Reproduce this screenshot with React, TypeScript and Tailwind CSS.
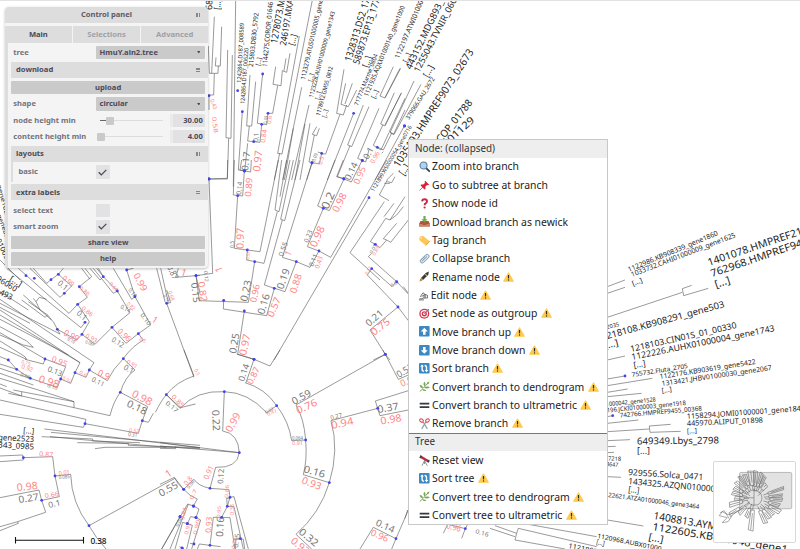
import React from "react";

type Label = [number, number, number, number, number, string];

/* Leaf names: start x, start y, end x, end y, font size, text */
const names: Label[] = [
  [241, 83, 244, 23, 5.8, "1242864.D187_008589"],
  [244.5, 104, 248.5, 48, 5.8, "1242864.D187_006220"],
  [253, 67, 258.5, 13, 6.4, "215803.DB30_5792"],
  [260, 66, 261.5, 58, 6.5, "[...]"],
  [267, 67, 273, 2, 6.8, "1144275.COROR_01646"],
  [277, 44, 285, 0, 9.5, "1278073.M"],
  [286, 46, 293.5, 0, 9, "246197.MXA"],
  [294, 46, 297, 35, 8.5, "[...]"],
  [305, 80, 323, 0, 6.4, "1123279.ATUS01000005_gene"],
  [312, 82, 314, 74, 6, "[...]"],
  [313, 98, 335, 12, 6, "1123228.AUIH01000009_gene1343"],
  [319, 100, 321, 92, 6, "[...]"],
  [320, 116, 333, 67, 6, "1178912.GM55_0812"],
  [326, 118, 328, 110, 6, "[...]"],
  [351, 62, 370, 0, 9.8, "1328313.DS2_17"],
  [359, 65, 380, 0, 9.5, "589873.EP13_177"],
  [368, 68, 371.5, 57, 9, "[...]"],
  [358, 106, 378, 55, 6, "717774.Marme_0804"],
  [368, 97, 405, 7, 6.6, "1121935.AQXX01000140_gene1000"],
  [375, 99, 378.5, 91, 6.5, "[...]"],
  [399, 59, 425, -2, 7, "1122197.ATWI010001"],
  [407, 63, 411, 54, 7, "[...]"],
  [411, 70, 446, -3, 9.4, "443152.MDG893_0"],
  [419, 73, 457, 0, 9, "1255043.TVNIR_060"],
  [428, 78, 434, 67, 9, "[...]"],
  [409, 120, 435, 79, 6.2, "379066.GAU_2672"],
  [399, 168, 474, 52, 10.6, "1035193.HMPREF9073_02673"],
  [404, 176, 410, 167, 10, "[...]"],
  [441, 143, 473, 103, 10.2, "COP_01788"],
  [451, 143, 475, 121, 10, "01129"],
  [374, 192, 412, 127, 5.6, "1121899.WS0000054_gene0716"],
  [212, 10, 212.5, 0, 9, "68"],
  [220, 10, 221, -1, 9, "[...]"],
  [629, 272, 718.5, 235, 7, "1122986.KB908339_gene1860"],
  [632, 277, 736, 237, 7, "1033732.CAHI01000009_gene1625"],
  [633, 286, 643, 282, 7, "[...]"],
  [709, 266, 803, 234, 10.3, "1401078.HMPREF21"],
  [712, 277, 803, 246, 10.3, "762968.HMPREF94"],
  [716, 288, 731, 283, 10.5, "[...]"],
  [594, 332, 619.5, 326, 5.5, "gene2035"],
  [602, 340.5, 725, 307, 9.2, "1218108.KB908291_gene503"],
  [605, 349, 619, 345.5, 9.2, "[...]"],
  [631, 352, 737, 328, 8.6, "1218103.CIN01S_01_00330"],
  [632, 360, 775, 331, 8.6, "1122226.AUHX01000004_gene1743"],
  [634, 368, 646, 366, 8.5, "[...]"],
  [632, 377, 688, 368, 6.3, "755732.Fluta_2705"],
  [660, 379, 756, 364, 7, "1122176.KB903619_gene5422"],
  [662, 386, 772, 370, 7, "1313421.JHBV01000030_gene2067"],
  [662, 393, 672, 391.5, 7, "[...]"],
  [600, 407, 656, 401.5, 6, "L01000042_gene1528"],
  [607, 412.5, 686, 405, 6.3, "196.JCKI01000003_gene1918"],
  [620, 417.5, 702, 410.5, 6.4, "742766.HMPREF9455_00368"],
  [687, 419, 801, 411, 7.4, "1158294.JOMI01000001_gene184"],
  [687, 426, 763, 422.5, 7.4, "445970.ALIPUT_01898"],
  [687, 433.5, 697, 433, 7, "[...]"],
  [637, 444.5, 719, 443.5, 9.5, "649349.Lbys_2798"],
  [637, 454, 650, 454, 9.5, "[...]"],
  [608, 460.5, 621, 461, 5.8, "7218"],
  [606, 466, 618, 467, 5.8, "4647"],
  [628, 475, 703, 480, 8.6, "929556.Solca_0471"],
  [628, 484, 715, 492, 8.6, "1434325.AZQN010000"],
  [628, 492, 639, 493.5, 8.6, "[...]"],
  [608, 497, 699, 509, 6.3, "22621.ATZA01000046_gene3464"],
  [653, 519, 716, 530, 10.3, "1408813.AYM"],
  [652, 530, 787, 553, 10.3, "1122605.KB883046_gene1"],
  [648, 540, 663, 543, 10, "[...]"],
  [597, 538, 661, 551, 6.5, "1120968.AUBX01000"],
  [596, 544, 604, 546, 7, "[...]"],
  [568, 548, 616, 558, 7, "1121802.gene"],
  [9, 280, 20, 287, 8, "[...]"],
  [-8, 278, 15, 292, 8.2, "196060"],
  [-4, 293, 11, 300, 8.2, "_493"],
  [23, 433, 34, 434, 8, "[...]"],
  [-2, 440, 34, 442, 8, "gene2523"],
  [-2, 447.5, 34, 449.5, 8, "343_0985"],
  [-3, 185, 5, 215, 6, "gene102"],
  [-3, 215, 7, 242, 6, "gene881"],
  [-4, 240, 9, 268, 7, "0100305"],
];

/* Branch lengths */
const lengths: Label[] = [
  [241, 195, 242.5, 182, 6.8, "0.14"], [234, 248, 234, 241, 5, "0.5"],
  [247, 302, 251.5, 281, 10, "0.23"], [264, 315, 270, 295, 10, "0.16"],
  [283, 290, 290, 270, 10, "0.19"], [236, 354, 239.5, 334, 10, "0.25"],
  [191, 283, 193.5, 303, 9, "0.15"], [283, 257, 288, 243, 7, "0.55"],
  [313, 267, 318, 255, 6.5, "0.11"], [308, 243, 312.5, 231, 6.5, "0.23"],
  [328, 210, 335, 194, 11, "0.2"], [350, 181, 358, 164, 9, "0.14"],
  [368, 160, 374, 149, 8.5, "0.1"], [248, 171, 250, 152, 9.3, "0.17"],
  [258, 142, 259, 133, 6.8, "0.1"], [369, 327, 384, 314, 9.6, "0.21"],
  [372, 254, 377, 245, 4.5, "0.05"], [244, 382, 249.5, 365, 8.8, "0.14"],
  [294, 405, 312, 395, 9.8, "0.59"], [378, 413, 399, 409.5, 10, "0.37"],
  [331, 420, 342.5, 417, 6, "0.27"], [303, 472, 324, 478, 10, "0.16"],
  [298, 533, 315, 547, 10, "0.32"], [375, 525, 393, 533, 9.4, "0.14"],
  [212, 410, 213, 431, 10, "0.22"], [223, 484, 224, 469, 7.8, "0.12"],
  [161, 497, 179, 487, 10, "0.55"], [223, 537, 224, 517, 10, "0.16"],
  [399, 378, 414, 369, 9.5, "0.52"], [165, 404, 176, 413, 6.3, "0.17"],
  [57, 284, 65, 291, 8, "0.1"], [76, 314, 84, 321, 8, "0.1"],
  [111, 341, 122, 348, 7.4, "0.12"], [47, 371, 61, 376.5, 7.6, "0.13"],
  [123, 369, 132, 374, 7.8, "0.1"], [91, 381, 103, 387, 7, "0.11"],
  [126, 406, 145, 415, 10, "0.18"], [49, 508, 61, 505, 8, "0.1"],
  [19, 503, 39, 500, 9.6, "0.27"], [167, 267, 173, 280, 9, "0.87"],
  [120, 308, 129, 313, 6, "0.14"], [140, 315, 148, 326, 6, "0.10"],
  [85, 343, 94, 346, 4.5, "0.082"], [67, 340, 74, 344, 5, "0.10"],
  [47, 387, 57, 390, 4.5, "0.10"], [59, 479, 70, 478, 4.8, "0.085"],
  [128, 436, 137, 437, 5.5, "0.31"], [163, 296, 167, 302, 5, "0.19"],
  [128, 290, 134, 298, 6, "0.18"], [266, 414, 274, 410, 4.5, "0.07"],
  [292, 440, 303, 440, 4.5, "0.064"], [475, 533, 488, 537, 6, "0.16"],
  [189, 489, 195, 482, 4.5, "0.09"], [315, 162, 318, 154, 5, "0.09"],
  [267, 124, 268, 116, 5, "0.09"], [20, 376, 30, 379, 4.5, "0.08"],
  [178, 527, 183, 518, 5, "0.06"], [238, 548, 240, 534, 7, "0.15"],
  [204, 271, 205, 282, 5, "0.12"], [392, 287, 399, 283, 4.5, "0.03"],
];

/* Branch supports */
const supports: Label[] = [
  [251, 197, 252.5, 178, 8.8, "0.89"], [243.5, 249, 244, 228, 10.2, "0.97"],
  [249, 260, 250, 252, 4, "0.57"], [256, 303, 260, 285, 9, "0.96"],
  [273, 318, 281, 299, 9.6, "0.57"], [296, 294, 302, 275, 9.6, "0.88"],
  [246, 356, 250.5, 335, 10.2, "0.97"], [198, 282, 201, 302, 9.2, "0.82"],
  [223, 271, 222, 268, 10, "1"], [290, 257, 292, 253, 9, "1"],
  [319, 269, 323, 257, 6.5, "0.43"], [316, 248, 325, 228, 10.3, "0.98"],
  [338, 213, 347, 195, 10, "0.98"], [359, 185, 366, 168, 9, "0.95"],
  [374, 164, 380, 153, 6.8, "0.96"], [260, 172, 262.5, 151, 10.4, "0.97"],
  [265, 143, 267, 130, 6.8, "0.84"], [271, 124, 272, 116, 6, "0.6"],
  [322, 165, 324, 157, 6, "0.5"], [374, 336, 391, 323, 10, "0.75"],
  [375, 256, 380, 247, 4.5, "0.89"], [252, 385, 260, 369, 8.8, "0.87"],
  [298, 414, 318, 405, 10, "0.76"], [381, 424.5, 402, 421, 10, "0.98"],
  [332, 429, 354, 424, 10, "0.94"], [301, 483, 320, 490, 9.8, "0.93"],
  [290, 542, 306, 555, 10, "0.93"], [370, 535, 387, 542, 9, "0.96"],
  [231, 433, 241, 415, 10, "0.99"], [208, 480, 214, 467, 7.5, "0.91"],
  [168, 478, 171, 476, 10, "1"], [187, 486, 193, 479, 7, "0.8"],
  [211, 533, 212, 517, 8, "0.93"], [402, 387, 418, 380, 9.5, "0.96"],
  [171, 397, 182, 408, 6.2, "0.85"], [133, 275, 142, 292, 9.2, "0.99"],
  [62, 279, 72, 287, 7, "0.99"], [81, 309, 91, 317, 6, "0.86"],
  [63, 335, 77, 342, 9, "0.99"], [117, 332, 128, 342, 7.8, "0.96"],
  [51, 361, 66, 367, 8, "0.95"], [38, 382, 58, 388, 10.3, "0.98"],
  [126, 363, 136, 369, 6, "0.91"], [97, 375, 108, 380, 9, "0.9"],
  [131, 396, 150, 406, 10.5, "0.98"], [39, 456, 53, 457, 6.6, "0.87"],
  [59, 475.5, 70, 474, 6, "0.01"], [45, 498, 59, 496, 6.6, "0.66"],
  [17, 491, 38, 489, 10.3, "0.98"], [151, 321, 154, 323, 9, "1"],
  [180, 275, 183, 276, 10, "1"], [85, 337, 96, 343, 6, "0.93"],
  [21, 363, 30, 366, 5, "0.75"], [21, 368, 32, 372, 6, "0.92"],
  [109, 284, 116, 292, 5, "0.69"], [79, 289, 88, 296, 5.5, "0.86"],
  [126, 305, 133, 311, 6, "0.82"], [129, 432, 139, 433, 5.5, "0.52"],
  [168, 292, 171, 301, 5.5, "0.68"], [194, 370, 197, 376, 5, "0.5"],
  [292, 445, 303, 445, 5, "0.91"], [268, 416, 277, 412, 4.5, "0.47"],
  [446, 528, 460, 532, 8.5, "0.96"], [210, 100, 214, 110, 5.5, "0.43"],
  [212, 117, 214, 133, 6, "0.58"], [184, 520, 187, 508, 5.5, "0.84"],
  [188, 535, 191, 523, 5.5, "0.92"], [197, 535, 200, 520, 5.5, "0.90"],
  [193, 500, 197, 490, 5, "0.7"], [228, 498, 229, 485, 4.8, "0.86"],
  [234, 515, 234, 504, 4.8, "0.33"], [220, 518, 221, 506, 4.8, "0.95"],
  [235, 549, 237, 538, 5, "0.77"], [367, 275, 372, 268, 4.5, "0.47"],
  [139, 340, 145, 343, 5, "0.5"], [62, 379, 71, 383, 4.5, "0.92"],
  [79, 373, 86, 377, 4.5, "0.6"],
];

/* Each tile holds branch strokes in its own three-times coordinate space */
const tiles: { origin: [number, number]; paths: string[]; dots: [number, number][] }[] = [
  {
    origin: [205, 0],
    paths: [
      "M28 50L20 220M50 80L46 198H31L33 172M40 198L39 220H13L10 138M28 220L26 285H12V330M68 150L63 413L78 415L82 165M71 415L67 537H12",
      "M92 0L85 560M112 335L100 510L119 513L128 430M135 225L125 378H140L152 245M133 378L128 423L165 427L170 373M173 222L157 370L185 374L189 340H203L218 257M212 200L204 253L228 257L232 212L245 217L255 160M237 212L243 175",
      "M283 108L218 460L231 462L322 0M224 460L208 540M290 262L233 540M312 315L260 540M265 385L238 540M300 372L270 540M315 370L285 540",
      "M335 380L322 403L335 407L343 385M328 405L312 486L343 492L350 460L338 456M417 208L395 340L415 345L425 315M422 250L408 313L430 320L455 270M442 250L420 312M405 343L362 462H350M321 489L305 540",
      "M446 340L367 540M475 315L428 435L440 440L492 320M435 437L397 530L416 536M458 475L482 486L492 450M458 475L522 325M568 278L527 372L540 378L588 280M534 374L505 436L528 450L552 398M565 200L525 288L540 294L587 205M598 378L510 540M600 295L553 395L566 402L600 330",
    ],
    dots: [[98, 272], [112, 335], [173, 222], [189, 340], [170, 373], [146, 425], [119, 513], [12, 287], [12, 537], [321, 489], [350, 460], [446, 340], [472, 481], [517, 442], [416, 536], [598, 378]],
  },
  {
    origin: [340, 0],
    paths: ["M185 278L135 375M222 243L150 398L162 404L243 253M155 400L130 450L112 441M130 455L125 460M180 205L135 293"],
    dots: [[194, 378]],
  },
  {
    origin: [190, 160],
    paths: [
      "M113 0L112 55L57 57L68 340L18 347L28 422L175 427L194 305M133 0L130 105L158 108L163 33L150 30L155 0M163 33L182 36L184 0M143 107L133 265L210 275L265 0M172 270L170 300L222 310L262 155M275 0L255 150L267 155L300 0M310 0L272 178L284 182L330 0M277 180L223 375L285 395L319 305M290 0L270 110",
      "M253 385L230 467L100 447L101 421M163 453L143 583L192 598M319 305L277 292L366 8M319 305L360 322L387 273L352 260L400 145M387 273L422 292L590 0M400 145L383 138L435 0M400 145L418 152L462 57L440 50L460 0M462 57L484 66L517 0M537 113L252 600",
      "M583 125L480 278L570 360M640 380L655 400M568 105L597 122M568 105L592 60M583 70L600 70M590 60L610 40M592 65L605 68L615 50M556 253L541 245L587 175M556 253L570 263L590 240L580 236L620 190M590 240L602 247L655 180M587 175L600 180L645 110M582 170L612 130M600 180L620 165L640 140M620 365L535 290L545 280M620 365L606 380L545 326L532 345L624 441L540 510L586 583L550 600M624 441L655 482M620 365L655 402M586 583L600 600",
    ],
    dots: [[57, 57], [18, 347], [101, 421], [163, 453], [194, 305], [172, 270], [143, 107], [163, 33], [253, 385], [319, 305], [366, 8], [387, 273], [400, 145], [462, 57], [517, 2], [537, 113], [556, 253], [545, 326], [620, 365], [624, 441], [586, 583], [192, 598]],
  },
  {
    origin: [160, 350],
    paths: [
      "M72 0L102 78Q50 95 19 134Q5 150 -14 187M19 134L60 175Q110 120 193 125Q265 127 320 188L350 167M255 98Q315 115 350 167Q387 215 395 272L437 270Q432 205 408 165L676 13L668 0M437 270Q442 330 430 374L508 398Q538 300 513 212L653 175L646 153L745 122M653 175L660 197L745 180M508 398Q480 490 408 553L455 597M676 13L715 88L745 75",
      "M193 125L188 243Q235 250 238 308Q232 355 167 352L150 415Q115 408 102 388L71 418Q50 400 43 382L0 403M71 418Q90 440 112 447L100 468L83 462L-20 640M150 415L207 419L210 442L202 469L185 502M238 308L0 278M238 308L0 288M0 295L47 296V290M258 98L282 28L230 12M282 28L330 48L360 0",
      "M745 480L708 566L640 532L600 597M708 566L695 597M60 500L5 597M85 463L30 597M100 468L117 477L108 503L122 510L95 597M108 503L92 500L82 521L68 517L45 597M82 521L97 526L80 597M185 502H160L150 586L118 582L112 597M150 586L182 590M185 502L210 503L225 597M202 469L222 470L250 597M210 442L222 440L265 597M202 469L200 445H210M241 566L228 564L226 597M241 566L250 568L254 597M67 595L58 590M102 582L90 580",
    ],
    dots: [[19, 134], [193, 125], [350, 167], [437, 270], [676, 13], [653, 175], [508, 398], [238, 308], [150, 415], [71, 418], [282, 28], [708, 566], [60, 500], [100, 468], [108, 503], [82, 521], [210, 442], [202, 469], [185, 502], [150, 586], [241, 566], [67, 595], [102, 582]],
  },
  {
    origin: [0, 260],
    paths: [
      "M470 25L495 125L500 130L582 352M482 25L505 128M500 130L512 128L500 90M415 520L427 482L445 487L460 460M427 482L443 440L361 397Q340 425 330 467L222 443V425L65 395M222 443L65 408L65 395L40 390M65 408L25 400M415 520L255 491L258 478L0 420M255 491L250 502L0 463",
      "M361 397Q375 350 405 330L370 296Q395 260 430 240L415 221L452 195L405 110L380 30M405 110L395 118L340 25M370 296Q340 325 322 362L268 330L282 308L0 118M268 330L258 352L225 338L240 308L0 150M225 338L212 370L182 357L197 320L135 297L0 218M182 357L172 382L91 355L0 325",
      "M415 221L378 250L336 202L390 158L352 93L310 50L295 25M352 93L340 100L280 25M336 202L285 253L246 223L268 185L233 133L262 112L238 80L275 50L255 25M246 223L230 240L172 208L160 185L70 105M172 208L180 222L0 130M233 133L207 160L55 25M255 187L243 203L20 25M193 100L215 78L175 43L190 25M193 100L180 112L90 25M153 59L140 70L100 25M175 43L153 59",
      "M155 180L143 165L85 125M143 165L135 172L65 120M120 150L108 125L100 115M108 125L118 112L140 118M0 165L210 290L240 308M0 178L205 285M0 200L80 243L100 262L70 255L0 225M0 243L75 290L80 298L0 262M75 298L130 312L135 297M25 300L0 290M25 300L50 328L0 312M50 328L91 355M0 340L100 375M0 355L115 390L222 425M20 380L0 372M0 384L65 408M0 95L85 150M0 142L90 190",
      "M290 25L310 50M245 25L270 58M380 30L400 25M0 0L60 60M310 50L300 60L270 25",
      "M551 688L525 655L267 797Q215 730 212 643L165 648L158 590L70 593L68 585L0 588M70 593V600L0 605M165 648L178 710L125 721L117 690L0 713M125 721L137 757L53 785L55 790L0 812M53 785L0 800M267 797Q285 830 318 867M133 507L600 563M153 517L460 545L600 556M125 530L278 537V543L420 548M232 548L385 550V556L600 563M285 566L315 562H525L600 566M150 530L500 562",
      "M535 25L527 52L588 47L600 100M588 47L600 46M587 432L541 443L499 404",
    ],
    dots: [[175, 43], [153, 59], [103, 55], [78, 47], [193, 100], [238, 80], [233, 133], [255, 187], [246, 223], [172, 208], [310, 50], [352, 93], [380, 30], [405, 110], [336, 202], [415, 221], [370, 296], [268, 330], [225, 338], [182, 357], [135, 297], [91, 355], [50, 328], [25, 300], [361, 397], [427, 482], [255, 491], [500, 130], [588, 47], [70, 593], [165, 648], [125, 721], [267, 797], [551, 688], [540, 770], [581, 739], [588, 772], [562, 791], [546, 864]],
  },
  {
    origin: [600, 200],
    paths: ["M22 260L75 240M22 280L75 262M22 352L247 277M275 256L247 266L251 287L325 265M22 480L75 468M22 537L75 528"],
    dots: [[75, 528]],
  },
  {
    origin: [600, 370],
    paths: ["M22 47L157 25M22 67L83 57M22 80L125 70M22 140L38 137M22 160L115 150M22 185L148 177M212 163L148 168L150 187L242 184M22 212L90 209M22 230L47 229M22 248L42 247M22 320L63 322M22 450L130 468"],
    dots: [[38, 137]],
  },
  {
    origin: [405, 395],
    paths: ["M0 370L8 345M128 388L115 415M128 388L181 401L170 430M270 392L335 415L340 400L575 455M335 415L330 435L480 462M370 388L575 425M181 401L188 388M255 400L330 425"],
    dots: [[181, 401]],
  },
];

function Labels({ items, fill }: { items: Label[]; fill: string }) {
  return (
    <g fill={fill} fontFamily='"Noto Sans", sans-serif'>
      {items.map(([x1, y1, x2, y2, size, text], i) => {
        const angle = (Math.atan2(y2 - y1, x2 - x1) * 180) / Math.PI;
        return (
          <text
            key={i}
            fontSize={size}
            transform={`translate(${x1} ${y1}) rotate(${angle})`}
            {...(text.length > 1 ? { textLength: Math.hypot(x2 - x1, y2 - y1), lengthAdjust: "spacingAndGlyphs" } : {})}
          >
            {text}
          </text>
        );
      })}
    </g>
  );
}

function Tree() {
  return (
    <svg className="block h-[549px] w-[800px]" viewBox="0 0 800 549">
      {tiles.map((tile, i) => (
        <g key={i} transform={`translate(${tile.origin[0]} ${tile.origin[1]}) scale(0.33333)`}>
          {tile.paths.map((d, j) => (
            <path key={j} d={d} fill="none" stroke="#555" strokeWidth="1.8" />
          ))}
        </g>
      ))}
      <Labels items={lengths} fill="#777" />
      <Labels items={supports} fill="#ff8585" />
      <Labels items={names} fill="#222" />
      {tiles.map((tile, i) => (
        <g key={i} fill="#4444e6">
          {tile.dots.map(([x, y], j) => (
            <circle key={j} cx={tile.origin[0] + x / 3} cy={tile.origin[1] + y / 3} r="1.4" />
          ))}
        </g>
      ))}
      <path d="M15.5 540.2H83.5M15.5 537V543.5M83.5 537V543.5" stroke="#111" strokeWidth="1.1" />
      <text x="90.5" y="543.5" fontSize="8.3" fontWeight="500" textLength="16" fontFamily='"Noto Sans", sans-serif' fill="#111">0.38</text>
      <path d="M0 .5H800" stroke="#e2e2e2" />
    </svg>
  );
}

/* ---------- control panel ---------- */

function Grip({ vertical }: { vertical?: boolean }) {
  return (
    <span className={vertical ? "flex gap-[1px]" : "flex flex-col gap-[1px]"}>
      <i className={vertical ? "h-[4px] w-[1.3px] bg-[#888]" : "h-[1.2px] w-[4px] bg-[#888]"} />
      <i className={vertical ? "h-[4px] w-[1.3px] bg-[#888]" : "h-[1.2px] w-[4px] bg-[#888]"} />
    </span>
  );
}

function Folder({ label, vertical }: { label: string; vertical?: boolean }) {
  return (
    <div className="flex h-4 items-center justify-between bg-[#dddddd] pl-[5px] pr-[8px] text-[#4a4a58]">
      <span>{label}</span>
      <Grip vertical={vertical} />
    </div>
  );
}

function Row({ label, children }: { label: string; children: React.ReactNode }) {
  return (
    <div className="flex h-[13.5px] items-center">
      <span className="w-[85px] shrink-0 pl-[2.3px] text-[#73737d]">{label}</span>
      {children}
    </div>
  );
}

function Select({ value }: { value: string }) {
  return (
    <div className="flex h-[13.5px] w-[109.3px] items-center justify-between rounded-[1px] bg-[#cacaca] pl-[3.5px] pr-[5px] text-[#4a4a58]">
      {value}
      <svg viewBox="0 0 4 3" className="h-[2.6px] w-[3.6px]"><path d="M0 0H4L2 3Z" fill="#4a4a58" /></svg>
    </div>
  );
}

function Slider({ value, filled }: { value: string; filled?: boolean }) {
  return (
    <>
      <div className="flex h-3 w-[67px] items-center">
        <i className={filled ? "ml-[4px] h-[1.5px] w-[6px] bg-[#66666e]" : "w-[1px]"} />
        <i className="h-[8px] w-[8.3px] rounded-[1px] bg-[#cacaca]" />
        <i className="h-px grow bg-[#dddddf]" />
      </div>
      <div className="ml-[7px] flex h-[13px] w-[35.3px] items-center justify-end rounded-[1px] border-l-[3px] border-[#ebebec] bg-[#e2e2e5] pr-[2.5px] text-[#4a4a58]">{value}</div>
    </>
  );
}

function Check({ on }: { on?: boolean }) {
  return (
    <span className="flex h-[13.6px] w-[13.8px] items-center justify-center rounded-[1px] bg-[#e2e2e5]">
      {on && (
        <svg viewBox="0 0 9 7" className="h-[7px] w-[9px]"><path d="M.7 3.2L3.3 5.9L8.3.9" fill="none" stroke="#4a4a58" strokeWidth="1.3" /></svg>
      )}
    </span>
  );
}

function Button({ label }: { label: string }) {
  return <div className="flex h-[13.3px] w-[194.3px] items-center justify-center rounded-[1px] bg-[#cacaca] text-[#4a4a58]">{label}</div>;
}

function ControlPanel() {
  return (
    <div className="absolute left-[5px] top-[7px] flex h-[261.3px] w-[203px] flex-col overflow-hidden rounded-[4px] bg-[#f4f4f4] font-['Noto_Sans',sans-serif] text-[7.6px] font-bold leading-none shadow-[0_1px_3px_rgba(0,0,0,0.25)]">
      <div className="relative flex h-[16.3px] shrink-0 items-center justify-center bg-[#dddddd] text-[#5b5b67]">
        Control panel
        <span className="absolute right-[8px]"><Grip vertical /></span>
      </div>
      <div className="mt-[3px] flex h-[16.4px] shrink-0 gap-[1.5px] text-center leading-[16.4px] text-[#a0a0a8]">
        <div className="flex-1 bg-[#dddddd] text-[#4a4a58]">Main</div>
        <div className="flex-1 bg-[#dddddd]">Selections</div>
        <div className="flex-1 bg-[#dddddd]">Advanced</div>
      </div>
      <div className="grow border-l-[3px] border-[#dddddd] pl-[3px] pt-[3px]">
        <Row label="tree"><Select value="HmuY.aln2.tree" /></Row>
        <div className="mt-[2.9px]"><Folder label="download" /></div>
        <div className="mt-[3px]"><Button label="upload" /></div>
        <div className="mt-[3px]"><Row label="shape"><Select value="circular" /></Row></div>
        <div className="mt-[2.9px]"><Row label="node height min"><Slider value="30.00" filled /></Row></div>
        <div className="mt-[2.8px]"><Row label="content height min"><Slider value="4.00" /></Row></div>
        <div className="mt-[2.7px]"><Folder label="layouts" vertical /></div>
        <div className="border-l-2 border-[#dddddd] pb-[2.8px] pt-[3px]">
          <div className="flex h-[13.6px] items-center pl-[5.5px] text-[#73737d]"><span className="w-[77.5px]">basic</span><Check on /></div>
        </div>
        <div className="mt-[2.8px]"><Folder label="extra labels" /></div>
        <div className="mt-[3.2px]"><Row label="select text"><Check /></Row></div>
        <div className="mt-[2.9px]"><Row label="smart zoom"><Check on /></Row></div>
        <div className="mt-[2.5px]"><Button label="share view" /></div>
        <div className="mt-[3px]"><Button label="help" /></div>
      </div>
    </div>
  );
}

/* ---------- context menu ---------- */

const glyphs: Record<string, React.ReactNode> = {
  zoom: <><path d="M7 7L10.2 10.2" stroke="#37474f" strokeWidth="1.8" strokeLinecap="round" /><circle cx="4.5" cy="4.5" r="3.5" fill="#a8d4f5" stroke="#607d9b" strokeWidth="1.1" /></>,
  pin: <><path d="M.5 10.5L4 7" stroke="#78909c" strokeWidth="1" /><path d="M6.2.8L10.2 4.7L9 5.3L8 5L6.4 6.8L6.5 9L5.5 9.4L1.6 5.4L2 4.5L4.2 4.6L6 3L5.6 1.6Z" fill="#dd2038" /></>,
  question: <><path d="M3.1 3.4Q3.2 1.3 5.6 1.3Q8 1.3 8 3.3Q8 4.6 6.6 5.3Q5.6 5.8 5.6 7.2" fill="none" stroke="#c62845" strokeWidth="1.9" /><circle cx="5.6" cy="9.5" r="1.1" fill="#c62845" /></>,
  inbox: <><path d="M1.5 5H9.5L11 8V10.6H0V8Z" fill="#a9583c" /><path d="M0 8H3L4 9H7L8 8H11V10.6H0Z" fill="#d28268" /><path d="M4.4 0H6.6V3.2H8.6L5.5 6.5L2.4 3.2H4.4Z" fill="#6fae45" /></>,
  tag: <><path d="M.3 3.6L1.2 1.3L4.2 1L10.6 6.2L6.8 10.4L.7 5.6Z" fill="#fcc658" /><path d="M6.8 10.4L10.6 6.2" stroke="#e2a33d" /><circle cx="2.2" cy="2.9" r=".7" fill="#fff" /></>,
  clip: <><path d="M1.3 7.3L6.8 1.8Q8.3.7 9.6 2Q10.8 3.4 9.6 4.7L4.4 9.6Q3 10.6 1.8 9.4Q.7 8.2 1.9 7L6.3 3" fill="#dce7ed" stroke="#7f9bb0" strokeWidth="1" /><path d="M3.2 8L7.8 3.6" stroke="#6d8fa8" strokeWidth="1" /></>,
  pen: <><path d="M.5 10.4L2.2 6.7L6.7 2L9.8.6L9.3 3.8L4.5 8.6Z" fill="#343b40" /><path d="M.5 10.4L2.2 6.7L4.5 8.6Z" fill="#d8902c" /><path d="M6 2.8L8.2 5" stroke="#e0a43b" strokeWidth="1.1" /></>,
  hand: <path d="M.3 8.8H3L4 8H8.4V5.2L6 4.4L2.5 6.6M6 4.4L4 2.8L1.2 6.8M4.6 5.8H7M4.2 7H7M0 9.9H5" fill="none" stroke="#444" strokeWidth=".75" />,
  target: <><circle cx="5.3" cy="5.8" r="5" fill="#d8324b" /><circle cx="5.3" cy="5.8" r="3.7" fill="#fff" /><circle cx="5.3" cy="5.8" r="2.6" fill="#d8324b" /><circle cx="5.3" cy="5.8" r="1.2" fill="#fff" /><path d="M5.3 5.8L10 1.2" stroke="#59758a" strokeWidth="1" /><path d="M8 2.9L8.5.7L10.6 2.2Z" fill="#4b9bd4" /></>,
  up: <><rect width="10.6" height="10.6" rx="1" fill="#3b88c3" /><path d="M5.3 1.8L8.8 5.4H6.6V8.7H4V5.4H1.8Z" fill="#fff" /></>,
  down: <><rect width="10.6" height="10.6" rx="1" fill="#3b88c3" /><path d="M5.3 8.8L8.8 5.2H6.6V1.9H4V5.2H1.8Z" fill="#fff" /></>,
  sort: <><rect width="10.6" height="10.6" rx="1" fill="#3b88c3" /><path d="M3.1 2.5V6.2Q3.1 8.1 5 8.1M7.5 8.1V4.4Q7.5 2.5 5.6 2.5" fill="none" stroke="#fff" strokeWidth="1.4" /><path d="M1.2 3.6L3.1 1.4L5 3.6ZM5.6 7L7.5 9.2L9.4 7Z" fill="#fff" /></>,
  herb: <><path d="M.8 10.4Q4 8 9.5 1.3" fill="none" stroke="#7b9b55" strokeWidth=".9" /><path d="M4 7.3Q.8 6.8.7 4Q4 4.2 4 7.3ZM5.7 5.5Q3.5 3.2 5.3.8Q7.6 3 5.7 5.5ZM7.8 3.3Q7.5 1 10.4.4Q10.4 3 7.8 3.3ZM5 6.6Q8.8 4.4 10.8 6.4Q8 8.5 5 6.6ZM3 8.4Q6 7.6 7.5 9.8Q4.5 10.8 3 8.4Z" fill="#74a956" /></>,
  equals: <path d="M.7 3.6H10.3M.7 7.2H10.3" stroke="#343b40" strokeWidth="1.7" />,
  scissors: <><path d="M4.2 4L8.3 10.8M6.8 4L2.7 10.8" stroke="#90a4ae" strokeWidth="1.3" /><ellipse cx="2.5" cy="2.5" rx="2" ry="1.5" transform="rotate(35 2.5 2.5)" fill="none" stroke="#dc4250" strokeWidth="1" /><ellipse cx="8.5" cy="2.5" rx="2" ry="1.5" transform="rotate(-35 8.5 2.5)" fill="none" stroke="#dc4250" strokeWidth="1" /></>,
  telescope: <><path d="M5.5 5.5L3 10.8M5.5 5.5L8.3 10.8M5.5 5.5V9" stroke="#7b8c96" strokeWidth=".9" /><path d="M1.6.3L10.4 5.4L9.2 7.6L.5 2.6Z" fill="#be2d3c" /><path d="M1.6.3L3.2 1.2L2 3.5L.5 2.6Z" fill="#37474f" /><path d="M9 4.6L10.8 5.7L9.7 7.8L7.9 6.8Z" fill="#37474f" /></>,
};

function Glyph({ name }: { name: string }) {
  return <svg viewBox="0 0 11 11" className="h-[11px] w-[11px] shrink-0 overflow-visible">{glyphs[name]}</svg>;
}

function Warning() {
  return (
    <svg viewBox="0 0 11 10" className="ml-[3.4px] h-[10px] w-[11px] shrink-0">
      <path d="M5.5 1L10.2 9.2H.8Z" fill="#ffcb4c" stroke="#ffcb4c" strokeWidth="1.3" strokeLinejoin="round" />
      <path d="M5.5 3V6.4" stroke="#2b2b2b" strokeWidth="1.2" />
      <circle cx="5.5" cy="8" r=".7" fill="#2b2b2b" />
    </svg>
  );
}

type Item = [string, string, boolean?];
const nodeItems: Item[] = [
  ["zoom", "Zoom into branch"], ["pin", "Go to subtree at branch"], ["question", "Show node id"],
  ["inbox", "Download branch as newick"], ["tag", "Tag branch"], ["clip", "Collapse branch"],
  ["pen", "Rename node", true], ["hand", "Edit node", true], ["target", "Set node as outgroup", true],
  ["up", "Move branch up", true], ["down", "Move branch down", true], ["sort", "Sort branch", true],
  ["herb", "Convert branch to dendrogram", true], ["equals", "Convert branch to ultrametric", true],
  ["scissors", "Remove branch", true],
];
const treeItems: Item[] = [
  ["telescope", "Reset view"], ["sort", "Sort tree", true],
  ["herb", "Convert tree to dendrogram", true], ["equals", "Convert tree to ultrametric", true],
];

function MenuItem({ item: [icon, label, warn] }: { item: Item }) {
  return (
    <div className="flex h-[18.35px] items-center whitespace-nowrap pl-[9.5px] text-[#1c1c1c]">
      <Glyph name={icon} />
      <span className={icon === "hand" ? "ml-[1.2px]" : "ml-[2.6px]"}>{label}</span>
      {warn && <Warning />}
    </div>
  );
}

function ContextMenu() {
  return (
    <div className="absolute left-[408px] top-[138.5px] w-[200px] border border-[#c8c8c8] bg-white font-['Noto_Sans',sans-serif] text-[10.4px] leading-none">
      <div className="flex h-[18px] items-center bg-[#eeeeee] pl-[6px] text-[9.9px] text-[#333]">Node: (collapsed)</div>
      {nodeItems.map((item) => <MenuItem key={item[1]} item={item} />)}
      <div className="flex h-[18.3px] items-center border-t border-[#777] bg-[#eeeeee] pl-[6px] text-[9.9px] text-[#333]">Tree</div>
      {treeItems.map((item) => <MenuItem key={item[1]} item={item} />)}
    </div>
  );
}

/* ---------- minimap ---------- */

/* Clades: direction in degrees, inner radius, outer radius, outer width */
const clades: [number, number, number, number][] = [
  [-124, 12, 27, 3], [-112, 14, 26, 4], [-97, 13, 28, 6], [-86, 12, 28, 4], [-73, 12, 27, 3.5],
  [-63, 13, 25, 3], [-48, 12, 19, 5], [-19, 15, 32, 3], [-6, 15, 29, 3], [3, 16, 29, 3.5],
  [16, 15, 27, 4], [28, 17, 30, 5], [41, 14, 26, 3.5], [52, 15, 26, 4], [65, 14, 28, 4.5],
  [96, 12, 33, 5], [112, 11, 21, 4], [134, 12, 22, 4], [146, 18, 30, 4], [165, 12, 26, 5],
  [180, 10, 20, 4], [194, 12, 23, 4], [208, 13, 23, 4], [222, 12, 25, 4],
];

function Minimap() {
  return (
    <div className="absolute left-[713px] top-[461px] h-[81.5px] w-[83px] rounded-[2px] border border-[#d8d8d8] bg-white">
      <svg viewBox="0 0 81 80" className="h-full w-full">
        <rect x="25.5" y="10.5" width="52.5" height="36.5" rx="1.5" fill="#e2e2e2" stroke="#aaa" strokeWidth=".8" />
        <g fill="none" stroke="#555" strokeWidth=".5">
          {clades.map(([a, r1, r2, w], i) => (
            <path
              key={i}
              transform={`translate(40 36.5) rotate(${a})`}
              d={`M${r1 - 5} 0H${r1}M${r1} ${-w / 3}V${w / 3}L${r2 - 1} ${w / 2}L${r2} ${-w / 2}ZM${r1 + 3} 0H${r2 - 1}`}
            />
          ))}
          <path d="M33 31Q40 25 47 32Q50 39 44 43Q35 45 33 38M29 29L36 34M50 28L44 34M30 44L36 40M28 47L21 51L14 53L8 50L5 54L13 56L8 61L14 60L18 54M6 51L10 49L15 57M30 36H40M40 27V44" />
        </g>
      </svg>
    </div>
  );
}

export default function App() {
  return (
    <div className="relative h-[549px] w-[800px] overflow-hidden bg-white">
      <Tree />
      <ControlPanel />
      <ContextMenu />
      <Minimap />
    </div>
  );
}
